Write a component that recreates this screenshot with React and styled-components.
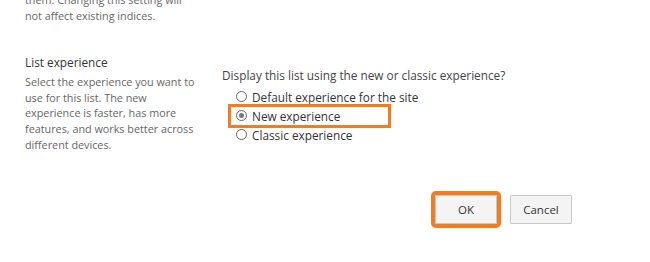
import React from "react";
import styled, { createGlobalStyle } from "styled-components";

const Global = createGlobalStyle`
  html, body { margin: 0; padding: 0; background: #fff; }
  body { font-family: "Segoe UI", "Open Sans", "Noto Sans", sans-serif; overflow: hidden; }
`;

const Page = styled.div`
  width: 650px;
  height: 262px;
  padding-left: 25px;
  box-sizing: border-box;
  display: flex;
  flex-direction: column;
`;

const Description = styled.p`
  margin: 0;
  width: 176px;
  font-size: 10.8px;
  line-height: 15.6px;
  color: #666;
`;

const TopNote = styled(Description)`
  margin-top: -8px;
`;

const Section = styled.div`
  display: flex;
  margin-top: 31px;
`;

const LeftCol = styled.div`
  width: 197px;
  flex-shrink: 0;
`;

const Heading = styled.h3`
  margin: 0 0 4px;
  font-size: 11.8px;
  font-weight: 400;
  line-height: 16px;
  color: #333;
`;

const RightCol = styled.div`
  padding-top: 13px;
`;

const Question = styled.div`
  font-size: 11.8px;
  line-height: 16px;
  color: #444;
  margin-bottom: 4px;
`;

const RadioList = styled.div`
  display: flex;
  flex-direction: column;
  padding-left: 14px;
`;

const RadioRow = styled.label`
  position: relative;
  display: flex;
  align-items: center;
  height: 19px;
  font-size: 11.8px;
  color: #333;
  gap: 5px;
`;

const Circle = styled.span`
  width: 9px;
  height: 9px;
  border: 1px solid #666;
  border-radius: 50%;
  box-sizing: content-box;
  display: flex;
  align-items: center;
  justify-content: center;
  background: #fff;
  &::after {
    content: "";
    width: 5px;
    height: 5px;
    border-radius: 50%;
    background: ${(p) => (p.$checked ? "#777" : "transparent")};
  }
`;

const Highlight = styled.span`
  position: absolute;
  left: -8px;
  top: -2px;
  width: 163px;
  height: 24px;
  border: 3.5px solid #f47b20;
  box-sizing: border-box;
  pointer-events: none;
`;

const ButtonRow = styled.div`
  display: flex;
  gap: 13px;
  margin-top: 43px;
  padding-left: 410px;
`;

const Button = styled.button`
  position: relative;
  width: 62px;
  height: 29px;
  background: #f4f4f4;
  border: 1px solid #c8c8c8;
  border-radius: 1px;
  font-family: inherit;
  font-size: 11.5px;
  color: #333;
  padding: 0;
  outline: ${(p) => (p.$highlight ? "4px solid #f47b20" : "none")};
  outline-offset: 0;
`;

export default function App() {
  return (
    <>
      <Global />
      <Page>
        <TopNote>
          them. Changing this setting will
          <br />
          not affect existing indices.
        </TopNote>
        <Section>
          <LeftCol>
            <Heading>List experience</Heading>
            <Description>
              Select the experience you want to use for this list. The new
              experience is faster, has more features, and works better across
              different devices.
            </Description>
          </LeftCol>
          <RightCol>
            <Question>Display this list using the new or classic experience?</Question>
            <RadioList>
              <RadioRow>
                <Circle />
                Default experience for the site
              </RadioRow>
              <RadioRow>
                <Circle $checked />
                New experience
                <Highlight />
              </RadioRow>
              <RadioRow>
                <Circle />
                Classic experience
              </RadioRow>
            </RadioList>
          </RightCol>
        </Section>
        <ButtonRow>
          <Button $highlight>OK</Button>
          <Button>Cancel</Button>
        </ButtonRow>
      </Page>
    </>
  );
}
